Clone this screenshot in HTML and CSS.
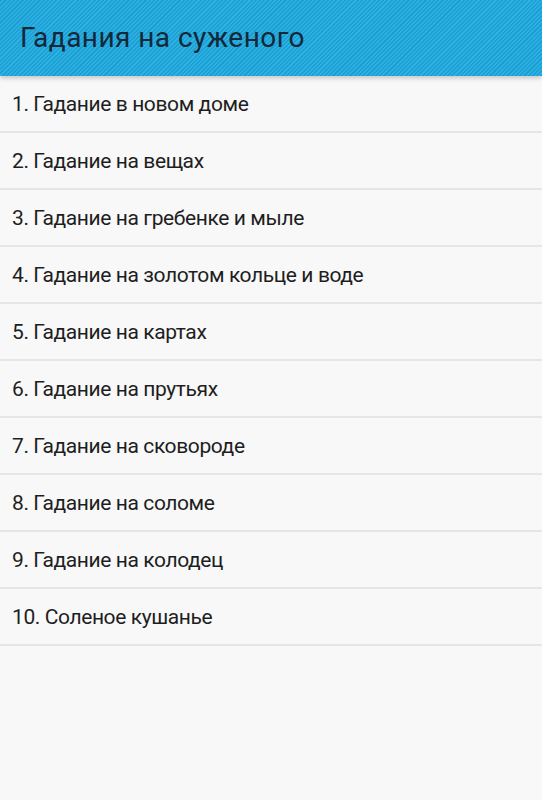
FILE: index.html
```html
<!DOCTYPE html>
<html lang="ru">
<head>
<meta charset="utf-8">
<title>Гадания на суженого</title>
<link rel="stylesheet" href="styles.css">
</head>
<body>
<header class="appbar">
  <h1 class="title">Гадания на суженого</h1>
</header>
<ul class="list">
  <li class="item">1. Гадание в новом доме</li>
  <li class="item">2. Гадание на вещах</li>
  <li class="item">3. Гадание на гребенке и мыле</li>
  <li class="item">4. Гадание на золотом кольце и воде</li>
  <li class="item">5. Гадание на картах</li>
  <li class="item">6. Гадание на прутьях</li>
  <li class="item">7. Гадание на сковороде</li>
  <li class="item">8. Гадание на соломе</li>
  <li class="item">9. Гадание на колодец</li>
  <li class="item">10. Соленое кушанье</li>
</ul>
</body>
</html>
```

FILE: styles.css
```css
html, body {
  margin: 0;
  padding: 0;
  background: #f8f8f8;
  font-family: Roboto, "Noto Sans", sans-serif;
  height: 100%;
}
.appbar {
  position: relative;
  height: 76px;
  display: flex;
  align-items: center;
  padding-left: 20px;
  background-color: #22a8da;
  background-image: repeating-linear-gradient(-45deg, #1aa0d4 0 1.5px, #2eb0e0 1.5px 3px);
  box-shadow: 0 2px 5px rgba(0,0,0,0.22);
  z-index: 1;
}
.title {
  margin: 0;
  font-size: 28px;
  font-weight: 400;
  color: #14283a;
  letter-spacing: 0.45px;
  padding-bottom: 1px;
}
.list {
  list-style: none;
  margin: 0;
  padding: 0;
}
.item {
  height: 55px;
  display: flex;
  align-items: center;
  padding-left: 12px;
  font-size: 21px;
  letter-spacing: -0.4px;
  color: #1e1e1e;
  border-bottom: 2px solid #e6e6e6;
}
```
